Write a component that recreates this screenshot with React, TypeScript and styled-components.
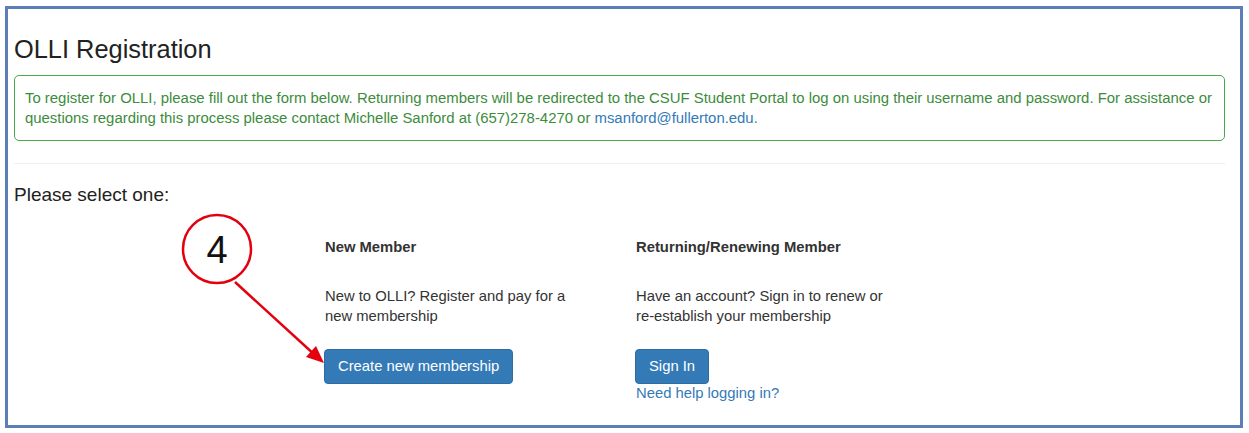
import React from "react";
import styled, { createGlobalStyle } from "styled-components";

const GlobalStyle = createGlobalStyle`
  html, body {
    margin: 0;
    padding: 0;
    background: #ffffff;
  }
  body {
    font-family: "Liberation Sans", Arial, Helvetica, sans-serif;
    color: #333333;
  }
  * { box-sizing: border-box; }
`;

const Frame = styled.div`
  position: relative;
  margin: 6px 0 0 5px;
  width: 1238px;
  height: 422px;
  border: 3px solid #5b7fb6;
  background: #ffffff;
  padding: 27px 15px 0 6px;
`;

const Title = styled.h1`
  margin: 0;
  font-size: 25.4px;
  line-height: 27.5px;
  font-weight: 400;
  color: #222222;
`;

const Alert = styled.div`
  margin-top: 11px;
  border: 1px solid #4aa94a;
  border-radius: 5px;
  padding: 12px 10px;
  font-size: 14.9px;
  line-height: 20px;
  color: #3c8c3c;
`;

const MailLink = styled.a`
  color: #337ab7;
  text-decoration: none;
`;

const Rule = styled.hr`
  margin: 22px 0 0;
  border: 0;
  border-top: 1px solid #eeeeee;
`;

const Prompt = styled.div`
  margin-top: 20px;
  font-size: 19px;
  line-height: 22px;
  color: #222222;
`;

const Options = styled.div`
  display: grid;
  grid-template-columns: 311px 311px;
  margin: 31px 0 0 311px;
`;

const Option = styled.div`
  display: flex;
  flex-direction: column;
  align-items: flex-start;
  font-size: 14.8px;
  line-height: 20px;
`;

const OptionTitle = styled.div`
  font-weight: 700;
  color: #333333;
`;

const OptionText = styled.p`
  margin: 29px 0 0;
  max-width: 265px;
  color: #333333;
`;

const Button = styled.button`
  margin: 23px 0 0 -1px;
  height: 35px;
  padding: 0 13px;
  font-family: inherit;
  font-size: 14.8px;
  color: #ffffff;
  background: #337ab7;
  border: 1px solid #2e6da4;
  border-radius: 4px;
  cursor: pointer;
`;

const HelpLink = styled.a`
  margin-top: -1px;
  color: #337ab7;
  text-decoration: none;
  font-size: 14.8px;
  line-height: 20px;
`;

const Annotation = styled.svg`
  position: absolute;
  left: 162px;
  top: 201px;
  width: 170px;
  height: 170px;
  pointer-events: none;
  overflow: visible;
`;

export default function App() {
  return (
    <>
      <GlobalStyle />
      <Frame>
        <Title>OLLI Registration</Title>
        <Alert>
          To register for OLLI, please fill out the form below. Returning members will be redirected to the CSUF
          Student Portal to log on using their username and password. For assistance or questions regarding this
          process please contact Michelle Sanford at (657)278-4270 or{" "}
          <MailLink href="#">msanford@fullerton.edu</MailLink>.
        </Alert>
        <Rule />
        <Prompt>Please select one:</Prompt>
        <Options>
          <Option>
            <OptionTitle>New Member</OptionTitle>
            <OptionText>New to OLLI? Register and pay for a new membership</OptionText>
            <Button>Create new membership</Button>
          </Option>
          <Option>
            <OptionTitle>Returning/Renewing Member</OptionTitle>
            <OptionText>Have an account? Sign in to renew or re-establish your membership</OptionText>
            <Button>Sign In</Button>
            <HelpLink href="#">Need help logging in?</HelpLink>
          </Option>
        </Options>
        <Annotation viewBox="0 0 170 170">
          <circle cx="47" cy="39" r="34" fill="#ffffff" stroke="#e3000f" strokeWidth="2.5" />
          <text
            x="47"
            y="53"
            textAnchor="middle"
            fontFamily="Liberation Sans, Arial, sans-serif"
            fontSize="38"
            fill="#111111"
          >
            4
          </text>
          <line x1="65" y1="72" x2="146" y2="146" stroke="#e3000f" strokeWidth="2.5" />
          <polygon points="154,153 136,147 146,136" fill="#e3000f" />
        </Annotation>
      </Frame>
    </>
  );
}
